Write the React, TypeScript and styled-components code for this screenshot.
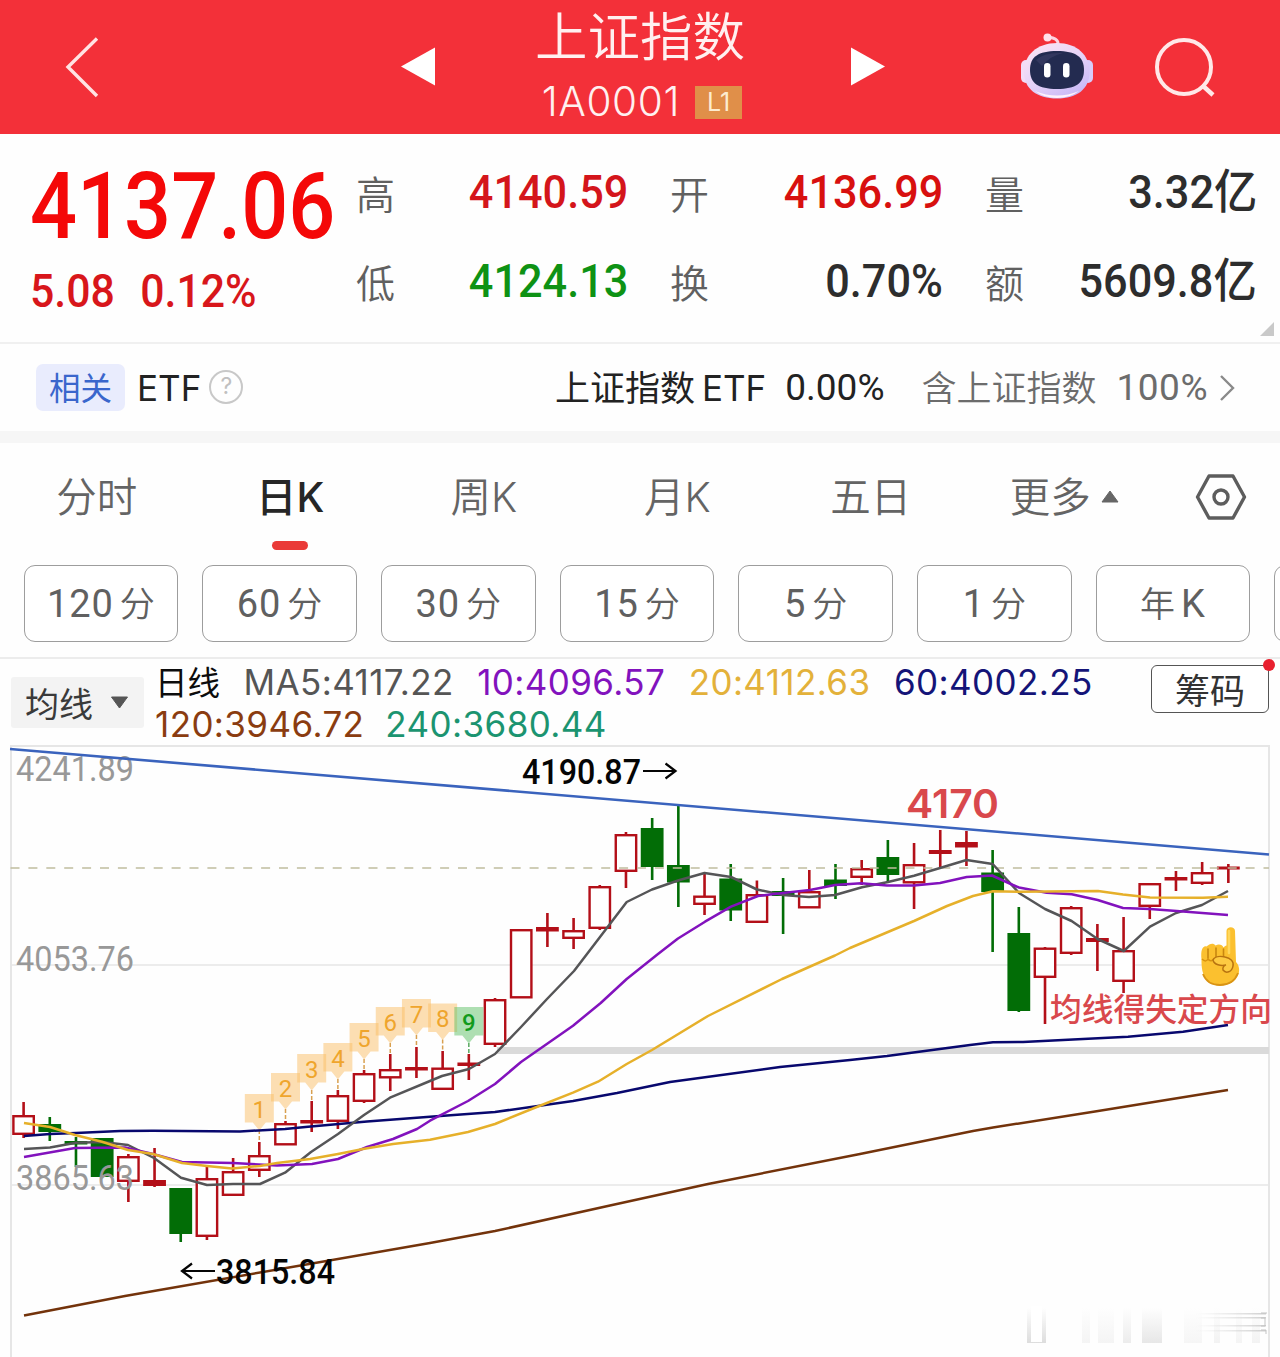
import React from "react";
import styled, { createGlobalStyle } from "styled-components";

const CJK = `"Noto Sans CJK SC"`;
const DIN = `Roboto, ${CJK}, sans-serif`;
const UI = `Inter, ${CJK}, sans-serif`;

const GlobalStyle = createGlobalStyle`
  * { box-sizing: border-box; }
  body { margin: 0; background: #fefefe; overflow: hidden; font-family: ${UI}; }
  svg { display: block; flex: none; }
`;

const Page = styled.main`
  width: 1280px;
  height: 1357px;
  overflow: hidden;
  display: flex;
  flex-direction: column;
  background: #fefefe;
`;

const Header = styled.header`
  height: 134px;
  flex: none;
  display: grid;
  grid-template-columns: 400px 36px 408px 42px 134px 135px 125px;
  align-items: center;
  background: #f33039;
  color: #fff0f0;
`;

const BackSlot = styled.div`
  padding-left: 64px;
`;

const TitleBlock = styled.div`
  display: flex;
  flex-direction: column;
  align-items: center;
  height: 134px;
`;

const Title = styled.h1`
  margin: 0;
  height: 75px;
  font: 350 52.5px/76px ${DIN};
`;

const CodeRow = styled.div`
  display: flex;
  align-items: center;
  gap: 15px;
  height: 54px;
  padding-left: 4px;
  font: 350 40.5px/54px ${UI};
  letter-spacing: 0.7px;
`;

const LevelBadge = styled.span`
  width: 47px;
  height: 33px;
  margin-top: 1px;
  background: #e08f49;
  color: #fdeccf;
  font: 400 25px/33px ${UI};
  letter-spacing: 0;
  text-align: center;
`;

const Quote = styled.section`
  height: 210px;
  flex: none;
  display: grid;
  grid-template-columns: 356px 314px 315px 272px;
  border-bottom: 2px solid #f0f0f0;
  position: relative;
`;

const Fold = styled.i`
  position: absolute;
  right: 6px;
  bottom: 6px;
  border-left: 14px solid transparent;
  border-bottom: 14px solid #c9c9c9;
`;

const PriceBlock = styled.div`
  padding-left: 30px;
  display: flex;
  flex-direction: column;
`;

const Price = styled.div`
  height: 143px;
  font: 500 93px/145px ${DIN};
  color: #f40808;
  white-space: nowrap;
  transform: scaleX(0.89);
  transform-origin: left;
`;

const Changes = styled.div`
  display: flex;
  gap: 28px;
  font: 500 47px/28px ${DIN};
  color: #d8161b;
  transform: scaleX(0.91);
  transform-origin: left;
`;

const StatColumn = styled.div`
  padding-top: 14px;
`;

const Stat = styled.div`
  height: 88.5px;
  display: flex;
  justify-content: space-between;
  align-items: center;
`;

const StatLabel = styled.span`
  font: 350 39px/60px ${CJK}, sans-serif;
  color: #606060;
`;

const StatValue = styled.span<{ $color?: string; $end: number }>`
  display: flex;
  align-items: center;
  font: 500 47px/60px ${DIN};
  color: ${(p) => p.$color ?? "#2d2d2d"};
  margin-right: ${(p) => p.$end}px;
  transform: scaleX(0.92);
  transform-origin: right;
`;

const Related = styled.section`
  height: 99px;
  flex: none;
  display: flex;
  align-items: center;
  padding: 0 44px 0 36px;
  border-bottom: 12px solid #f6f6f6;
  color: #222;
  font: 400 35px/50px ${UI};
  white-space: nowrap;
`;

const RelatedTag = styled.span`
  width: 89px;
  height: 47px;
  border-radius: 7px;
  background: #e9ecfd;
  color: #3a66cc;
  font: 400 31.5px/44px ${CJK}, sans-serif;
  text-align: center;
  margin-right: 12px;
`;

const Help = styled.span`
  width: 34px;
  height: 34px;
  margin-left: 8px;
  margin-top: -2px;
  border: 2.5px solid #c8c8c8;
  border-radius: 50%;
  color: #c0c0c0;
  font: 400 23px/29px ${UI};
  text-align: center;
`;

const RelatedText = styled.span<{ $ml: string; $muted?: boolean; $num?: boolean }>`
  margin-left: ${(p) => p.$ml};
  color: ${(p) => (p.$muted ? "#6c6c6c" : "#222")};
  font-family: ${(p) => (p.$num ? DIN : UI)};
  font-size: ${(p) => (p.$num ? 37 : 35)}px;
  font-weight: ${(p) => (p.$muted && !p.$num ? 350 : 400)};
  letter-spacing: ${(p) => (p.$muted && p.$num ? 0.5 : 0)}px;
  word-spacing: -3px;
`;

const Tabs = styled.nav`
  height: 122px;
  flex: none;
  display: grid;
  grid-template-columns: repeat(6, 193.5px) 1fr;
  justify-items: center;
`;

const Tab = styled.div<{ $active?: boolean }>`
  height: 107px;
  padding-top: 3px;
  display: flex;
  align-items: center;
  gap: 10px;
  position: relative;
  font: ${(p) => (p.$active ? 500 : 350)} 40.5px/104px ${UI};
  color: ${(p) => (p.$active ? "#262626" : "#646464")};
  > svg {
    margin-top: -3px;
  }
  ${(p) =>
    p.$active &&
    `&::after {
      content: "";
      position: absolute;
      left: 50%;
      bottom: 0;
      width: 36px;
      height: 9px;
      margin-left: -18px;
      border-radius: 5px;
      background: #ea3a38;
    }`}
`;

const Periods = styled.div`
  height: 94px;
  flex: none;
  display: flex;
  gap: 24px;
  padding-left: 23.5px;
  overflow: hidden;
  border-bottom: 2px solid #ececec;
`;

const Period = styled.button`
  flex: none;
  width: 154.7px;
  height: 77px;
  padding: 0;
  border: 1.5px solid #9d9d9d;
  border-radius: 11px;
  background: #fff;
  display: flex;
  align-items: center;
  justify-content: center;
  gap: 6px;
  color: #606060;
  font: 350 35px/74px ${CJK}, sans-serif;
`;

const PeriodUnit = styled.span`
  height: 78px;
`;

const PeriodNumber = styled.span`
  font: 400 38px/78px ${DIN};
  letter-spacing: 0.9px;
`;

const Legend = styled.section`
  height: 86px;
  flex: none;
  display: flex;
  padding-left: 11px;
  white-space: nowrap;
`;

const MaSelect = styled.button`
  flex: none;
  width: 133px;
  height: 51px;
  margin: 18px 11px 0 0;
  padding: 0 15px 0 14px;
  border: 0;
  border-radius: 3px;
  background: #f3f3f3;
  display: flex;
  align-items: center;
  justify-content: space-between;
  color: #3a3a3a;
  font: 400 34px/48px ${CJK}, sans-serif;
`;

const MaLines = styled.div`
  width: 996px;
  padding-top: 3px;
`;

const MaRow = styled.div<{ $gap: number }>`
  display: flex;
  height: 41.5px;
  align-items: center;
  gap: ${(p) => p.$gap}px;
  font: 400 35px/41.5px ${UI};
`;

const MaItem = styled.span<{ $color: string }>`
  color: ${(p) => p.$color};
  letter-spacing: 0.4px;
`;

const MaTitle = styled.span`
  height: 43px;
  color: #0c0c0c;
  font: 400 32.5px/39px ${CJK}, sans-serif;
`;

const ChipButton = styled.button`
  position: relative;
  width: 118px;
  height: 48px;
  margin-top: 6px;
  padding: 0;
  border: 1.5px solid #555;
  border-radius: 6px;
  background: #fff;
  color: #333;
  font: 400 35px/42px ${CJK}, sans-serif;
  &::after {
    content: "";
    position: absolute;
    right: -7px;
    top: -7px;
    width: 12px;
    height: 12px;
    border-radius: 50%;
    background: #e8202f;
  }
`;

const ChartSvg = styled.svg`
  width: 1280px;
  height: 612px;
  text {
    font-family: ${DIN};
  }
`;

type Kind = "r" | "g";
/* kind, body top, body bottom, wick top, wick bottom */
const candles: [Kind, number, number, number, number][] = [
  ["r", 1115, 1135, 1102, 1138], ["g", 1124, 1132, 1117, 1141], ["g", 1141, 1144.5, 1137, 1167],
  ["g", 1138, 1177, 1138, 1177], ["r", 1156, 1182, 1154, 1202], ["r", 1180, 1186, 1148, 1187],
  ["g", 1188, 1234, 1188, 1242], ["r", 1178, 1237, 1167, 1240], ["r", 1171, 1196, 1158, 1196],
  ["r", 1155, 1171, 1142, 1177], ["r", 1123, 1145.5, 1121, 1145], ["r", 1120, 1123.5, 1101, 1132],
  ["r", 1095, 1122, 1090, 1129], ["r", 1073, 1102, 1070, 1103], ["r", 1069, 1078.5, 1054, 1091],
  ["r", 1067, 1070.5, 1047, 1078], ["r", 1067.5, 1090, 1051, 1090], ["r", 1062.5, 1066, 1054, 1080],
  ["r", 999, 1045, 998, 1047], ["r", 929, 998.5, 929, 998], ["r", 927, 931.5, 913, 947],
  ["r", 930, 939, 918, 949], ["r", 886, 929, 885, 930], ["r", 834, 872, 832, 888],
  ["g", 828, 867, 818, 880], ["g", 865, 882.5, 806, 907], ["r", 895.5, 905, 873, 915],
  ["g", 878.5, 910.5, 864, 921], ["r", 894, 923, 880.5, 923], ["g", 891, 896, 878, 934],
  ["r", 891, 908.5, 870, 908], ["g", 879.5, 886, 864, 899], ["r", 868, 878, 860, 885],
  ["g", 857, 875, 840, 882], ["r", 864, 883.5, 843, 909], ["r", 850, 854, 830, 867],
  ["r", 842, 847.5, 831, 866], ["g", 872.5, 892, 850, 952], ["g", 933, 1011, 907, 1012],
  ["r", 947.5, 978, 947, 1024], ["r", 907, 954, 906, 955], ["r", 938, 942, 924, 971],
  ["r", 950, 982, 917, 993], ["r", 883, 907, 883, 919], ["r", 877, 880.5, 871, 891],
  ["r", 872, 884, 862, 885], ["r", 866.5, 869.5, 864, 883],
];
const cx = (i: number) => 23.6 + i * 26.19;

const averages = [
  { color: "#73330b", d: "24,1315.5 125,1296 430,1243 495,1231 610,1205.500 708,1184 860,1154 973,1131 993,1127.500 1095,1111.500 1228,1090" },
  { color: "#08086e", d: "24,1136 50,1134 76,1133 120,1131 153,1130.700 240,1131.500 285,1129 308,1126.700 367,1121.500 430,1116.700 495,1112 573,1101 617,1093 670,1082 780,1067 850,1060 887,1056 970,1045 993,1042.200 1023,1042 1128,1036.700 1183,1031.700 1228,1025" },
  { color: "#555557", d: "24,1149 50,1147.500 76,1142.700 102,1142 128,1145 154,1158 181,1177.700 207,1185 233,1184 260,1184 285,1172.700 311,1152 338,1134 364,1115 390,1097.700 430,1081 442,1076 469,1069 495,1054 521,1027 547,999 574,971 600,937 626.700,902 652,889.500 678,880.500 704.500,873 731,877 757,889.500 783,895 809,897 835,895 862,887.200 888,882 914,875.700 940,868 966.500,860 992.700,864 1019,893 1045,909 1071.600,921 1097.600,939 1123.800,951 1150,926.700 1176,913 1202,905 1228,891" },
  { color: "#8212bd", d: "24,1157 75,1148 125,1147.500 153,1154 182,1162 233,1163 277,1165.500 312,1164 338,1159 367,1147 393,1139 417,1129 430,1120.700 468,1101 495,1084 521,1062 573,1025.700 600.700,1003 626.700,979 658,954 678,938.500 705,921.700 731,906.700 758,896 783,893 810,890 835,885 861,883.200 887,885.500 914,885.500 940,883 966.700,877 992,875.500 1013,885 1019,887.500 1046.700,892.700 1071.700,894.200 1097.700,900 1123,908 1150,909 1176.700,911 1228,915" },
  { color: "#e6b02a", d: "24,1123 50,1127 75,1135 102,1141.700 128,1150 153,1154 182,1163 207,1166 232,1168.500 260,1166 277,1163 310,1159 338,1154 363,1149 393,1144 430,1139.700 468,1132 495,1124 536.700,1107 573,1092.700 598,1081.700 626.700,1064 652,1050 708,1016 782,979 835,955.500 850,948 914,921 947,906 973,896 993,891.200 1019,891.700 1098,891 1123,894.500 1150,897.500 1203,897.700 1228,896.700" },
];

const tags = [1094, 1073, 1054, 1043, 1023, 1007, 999, 1003.5, 1007];

function Candle({ row, i }: { row: (typeof candles)[number]; i: number }) {
  const [kind, top, bottom, high, low] = row;
  const color = kind === "r" ? "#b30f18" : "#026d06";
  const hollow = kind === "r" && bottom - top > 7;
  const x = cx(i);
  return (
    <g>
      {high < top && <rect x={x - 1.3} y={high} width={2.6} height={top - high + 1} fill={color} />}
      {low > bottom && <rect x={x - 1.3} y={bottom - 1} width={2.6} height={low - bottom + 1} fill={color} />}
      {hollow ? (
        <rect x={x - 10.2} y={top + 1.2} width={20.4} height={bottom - top - 2.4} fill="#fff" stroke={color} strokeWidth={2.4} />
      ) : (
        <rect x={x - 11.4} y={top} width={22.8} height={bottom - top} fill={color} />
      )}
    </g>
  );
}

function CountTag({ top, i }: { top: number; i: number }) {
  const x = cx(i + 9);
  const last = i === 8;
  return (
    <g>
      <path
        d={`M${x - 14.5} ${top}h29v28.500h-8l-6.500 8l-6.500 -8h-8z`}
        fill={last ? "#58bf60" : "#fbbd60"}
        opacity={0.48}
      />
      <line x1={x} x2={x} y1={top + 36} y2={top + 48} stroke={last ? "#58a860" : "#d8a050"} strokeWidth={1.5} strokeDasharray="4 2" />
      <text x={x} y={top + 23.5} fontSize={24} fontWeight={last ? 500 : 400} textAnchor="middle" fill={last ? "#129a1c" : "#efa52c"}>
        {i + 1}
      </text>
    </g>
  );
}

function PointingHand() {
  return (
    <g>
      <path
        d="M1226.500 931c0-5 8.500-5 8.500 0l1 31c3 3 4 8 2.500 12c-3 8-10 11.500-18.500 11.500c-9 0-14.500-4-16.500-11c-2-5-2-10-2-15c-1-9 1-14 5-13c3-3 7-4 9-1c3-2 7-1 8 2c2-2 3-2 3-2z"
        fill="#fbc02f"
      />
      <path d="M1229 931v22" stroke="#ffd75c" strokeWidth={2.5} strokeLinecap="round" />
      <path d="M1208 949v9M1216 948v9M1223.500 949v8" stroke="#c98710" strokeWidth={1.6} fill="none" strokeLinecap="round" />
      <path d="M1202 959c3 3 5 2 6 0c2 3 5 2 6-1" stroke="#d8920f" strokeWidth={1.5} fill="none" />
      <path d="M1213 960c2-4 8-4 12-3c5 1 9 4 8 9c-1 6-7 8-10 4c-1-3 2-5 3-5c-5 1-12 0-13-5z" fill="#fdca42" stroke="#b87310" strokeWidth={1.5} />
      <path d="M1203 974c3 8 9 11 17 11c9 0 15-4 18-12" fill="none" stroke="#d99314" strokeWidth={1.8} />
    </g>
  );
}

function Watermark() {
  const bars = [[1082, 8, 0.3], [1098, 16, 0.3], [1123, 8, 0.55], [1142, 20, 0.7], [1184, 18, 0.25], [1214, 6, 0.35], [1236, 6, 0.3], [1252, 8, 0.35]];
  return (
    <g>
      <defs>
        <linearGradient id="fade" x1="0" y1="0" x2="0" y2="1">
          <stop offset="0" stopColor="#ddd" stopOpacity="0" />
          <stop offset="1" stopColor="#ddd" />
        </linearGradient>
        <linearGradient id="edge" x1="0" y1="0" x2="1" y2="0">
          <stop offset="0" stopColor="#ddd" stopOpacity="0" />
          <stop offset="1" stopColor="#cfcfcf" />
        </linearGradient>
      </defs>
      <rect x={1027} y={1308} width={19} height={35} fill="url(#fade)" />
      <rect x={1031} y={1306} width={11} height={36} fill="#fff" />
      {bars.map(([x, w, o]) => (
        <rect key={x} x={x} y={1308} width={w} height={35} fill="url(#fade)" opacity={o} />
      ))}
      {[1313, 1317, 1325, 1330].map((y) => (
        <rect key={y} x={1195} y={y} width={71} height={1.5} fill="url(#edge)" />
      ))}
      <path d="M1261 1313h6M1261 1318h4v8h-4M1261 1330h5v4" stroke="#c4c4c4" fill="none" />
    </g>
  );
}

function Chart() {
  const fit = { lengthAdjust: "spacingAndGlyphs" as const };
  return (
    <ChartSvg viewBox="0 745 1280 612">
      <g stroke="#e6e6e6" strokeWidth={2} fill="none">
        <path d="M11 1357V746H1269V1357" />
        <path d="M11 965H1269M11 1185H1269" strokeWidth={1.5} />
      </g>
      <rect x={497} y={1047} width={772} height={7} fill="#dadada" />
      {candles.map((row, i) => <Candle key={i} row={row} i={i} />)}
      <line x1={10.500} x2={1269} y1={868} y2={868} stroke="#c0bd9f" strokeWidth={1.7} strokeDasharray="9 8.900" />
      {tags.map((top, i) => <CountTag key={i} top={top} i={i} />)}
      {averages.map((a) => (
        <polyline key={a.color} points={a.d} fill="none" stroke={a.color} strokeWidth={2.5} strokeLinejoin="round" />
      ))}
      <g fontSize={35} fill="#989898" fontWeight={450}>
        <text x={16} y={780.500} textLength={118} {...fit}>4241.89</text>
        <text x={16} y={970.500} textLength={118} {...fit}>4053.76</text>
        <text x={16} y={1190} textLength={118} {...fit}>3865.63</text>
      </g>
      <line x1={10} y1={749} x2={1269} y2={854.500} stroke="#3a63bd" strokeWidth={2.6} />
      <g fontSize={35} fill="#050505" fontWeight={500}>
        <text x={522} y={783.500} textLength={119} {...fit}>4190.87</text>
        <text x={216} y={1283.500} textLength={119} {...fit}>3815.84</text>
      </g>
      <path d="M643 771H675M665.500 763.500L675.500 771L665.500 778.500M215 1271H182.500M192 1263.500L182 1271L192 1278.500" fill="none" stroke="#050505" strokeWidth={2.2} />
      <text x={906} y={817.500} textLength={93} {...fit} fill="#d9484c" style={{ font: `600 39px ${UI}` }}>4170</text>
      <text x={1050} y={1020.500} textLength={222} {...fit} fill="#d9484c" style={{ font: `500 31.5px ${CJK}, sans-serif` }}>均线得失定方向</text>
      <PointingHand />
      <Watermark />
    </ChartSvg>
  );
}

function Robot() {
  return (
    <svg width="74" height="68" viewBox="0 0 74 68">
      <defs>
        <linearGradient id="shell" x1="0" y1="0" x2="0.700" y2="1">
          <stop offset="0" stopColor="#ffe6f2" />
          <stop offset="0.550" stopColor="#e6d3f8" />
          <stop offset="1" stopColor="#c9b9f6" />
        </linearGradient>
      </defs>
      <path d="M28 4C34 5 39 6 38 13" fill="none" stroke="#fcd3e0" strokeWidth="3" />
      <circle cx="27.500" cy="4.500" r="4" fill="#ffe0ea" />
      <rect x="1" y="27" width="10" height="23" rx="5" fill="#f3dcf6" />
      <rect x="63" y="27" width="10" height="23" rx="5" fill="#d8cbfa" />
      <path d="M37 10C57 10 69.500 22 69.500 39C69.500 56 57 65.500 37 65.500C17 65.500 4 56 4 39C4 22 17 10 37 10Z" fill="url(#shell)" />
      <path d="M15 58Q37 67 59 58Q50 65 37 65Q24 65 15 58Z" fill="#fff2fb" />
      <path d="M37 18C56 18 64 24 64 37C64 50 56 56 37 56C18 56 10 50 10 37C10 24 18 18 37 18Z" fill="#232b50" />
      <path d="M16 27Q24 19 43 20Q30 23 22 33Z" fill="#4a4a72" opacity="0.400" />
      <rect x="24" y="30" width="6.500" height="14.500" rx="3.250" fill="#fff" />
      <rect x="43" y="30" width="6.500" height="14.500" rx="3.250" fill="#fff" />
    </svg>
  );
}

const periods = ["120", "60", "30", "15", "5", "1"];

export default function App() {
  return (
    <Page>
      <GlobalStyle />
      <Header>
        <BackSlot>
          <svg width="36" height="62" viewBox="0 0 36 62"><path d="M33 2.500L4 31L33 60" fill="none" stroke="#ffe3e3" strokeWidth="3.400" /></svg>
        </BackSlot>
        <svg width="36" height="40" viewBox="0 0 36 40"><path d="M1 19.500L35 0.500V38.500Z" fill="#fff" /></svg>
        <TitleBlock>
          <Title>上证指数</Title>
          <CodeRow>1A0001<LevelBadge>L1</LevelBadge></CodeRow>
        </TitleBlock>
        <svg width="42" height="40" viewBox="0 0 42 40"><path d="M7 0.500V38.500L41 19.500Z" fill="#fff" /></svg>
        <div />
        <Robot />
        <svg width="62" height="62" viewBox="0 0 62 62"><circle cx="29" cy="31" r="27" fill="none" stroke="#ffe8e8" strokeWidth="4" /><path d="M47 49L58 59" stroke="#ffe8e8" strokeWidth="4.500" /></svg>
      </Header>

      <Quote>
        <PriceBlock>
          <Price>4137.06</Price>
          <Changes><span>5.08</span><span>0.12%</span></Changes>
        </PriceBlock>
        <StatColumn>
          <Stat><StatLabel>高</StatLabel><StatValue $end={42} $color="#d4151b">4140.59</StatValue></Stat>
          <Stat><StatLabel>低</StatLabel><StatValue $end={42} $color="#0e9214">4124.13</StatValue></Stat>
        </StatColumn>
        <StatColumn>
          <Stat><StatLabel>开</StatLabel><StatValue $end={42} $color="#d8100f">4136.99</StatValue></Stat>
          <Stat><StatLabel>换</StatLabel><StatValue $end={42}>0.70%</StatValue></Stat>
        </StatColumn>
        <StatColumn>
          <Stat><StatLabel>量</StatLabel><StatValue $end={0}>3.32亿</StatValue></Stat>
          <Stat><StatLabel>额</StatLabel><StatValue $end={0}>5609.8亿</StatValue></Stat>
        </StatColumn>
        <Fold />
      </Quote>

      <Related>
        <RelatedTag>相关</RelatedTag>
        <span>ETF</span>
        <Help>?</Help>
        <RelatedText $ml="auto">上证指数 ETF</RelatedText>
        <RelatedText $ml="19px" $num>0.00%</RelatedText>
        <RelatedText $ml="37px" $muted>含上证指数</RelatedText>
        <RelatedText $ml="20px" $muted $num>100%</RelatedText>
        <svg width="18" height="30" viewBox="0 0 18 30" style={{ marginLeft: 10 }}><path d="M3 3L15 15L3 27" fill="none" stroke="#8a8a8a" strokeWidth="2.400" /></svg>
      </Related>

      <Tabs>
        <Tab>分时</Tab>
        <Tab $active>日K</Tab>
        <Tab>周K</Tab>
        <Tab>月K</Tab>
        <Tab>五日</Tab>
        <Tab>更多<svg width="18" height="13" viewBox="0 0 18 13"><path d="M9 1L17 12H1Z" fill="#666" stroke="#666" strokeLinejoin="round" /></svg></Tab>
        <Tab><svg width="52" height="48" viewBox="0 0 52 48"><path d="M14 3H38L49.500 24L38 45H14L2.500 24Z" fill="none" stroke="#5d5d5d" strokeWidth="3.400" strokeLinejoin="round" /><circle cx="26" cy="24" r="7" fill="none" stroke="#5d5d5d" strokeWidth="3.400" /></svg></Tab>
      </Tabs>

      <Periods>
        {periods.map((n) => (
          <Period key={n}><PeriodNumber>{n}</PeriodNumber><PeriodUnit>分</PeriodUnit></Period>
        ))}
        <Period><PeriodUnit>年</PeriodUnit><PeriodNumber>K</PeriodNumber></Period>
        <Period />
      </Periods>

      <Legend>
        <MaSelect>均线<svg width="19" height="13" viewBox="0 0 19 13"><path d="M1.500 1H17.500L9.500 12Z" fill="#555" stroke="#555" strokeLinejoin="round" /></svg></MaSelect>
        <MaLines>
          <MaRow $gap={23.5}>
            <MaTitle>日线</MaTitle>
            <MaItem $color="#555">MA5:4117.22</MaItem>
            <MaItem $color="#8212bd">10:4096.57</MaItem>
            <MaItem $color="#e3b13a">20:4112.63</MaItem>
            <MaItem $color="#141478">60:4002.25</MaItem>
          </MaRow>
          <MaRow $gap={21}>
            <MaItem $color="#8a3c10">120:3946.72</MaItem>
            <MaItem $color="#1b9470">240:3680.44</MaItem>
          </MaRow>
        </MaLines>
        <ChipButton>筹码</ChipButton>
      </Legend>

      <Chart />
    </Page>
  );
}
